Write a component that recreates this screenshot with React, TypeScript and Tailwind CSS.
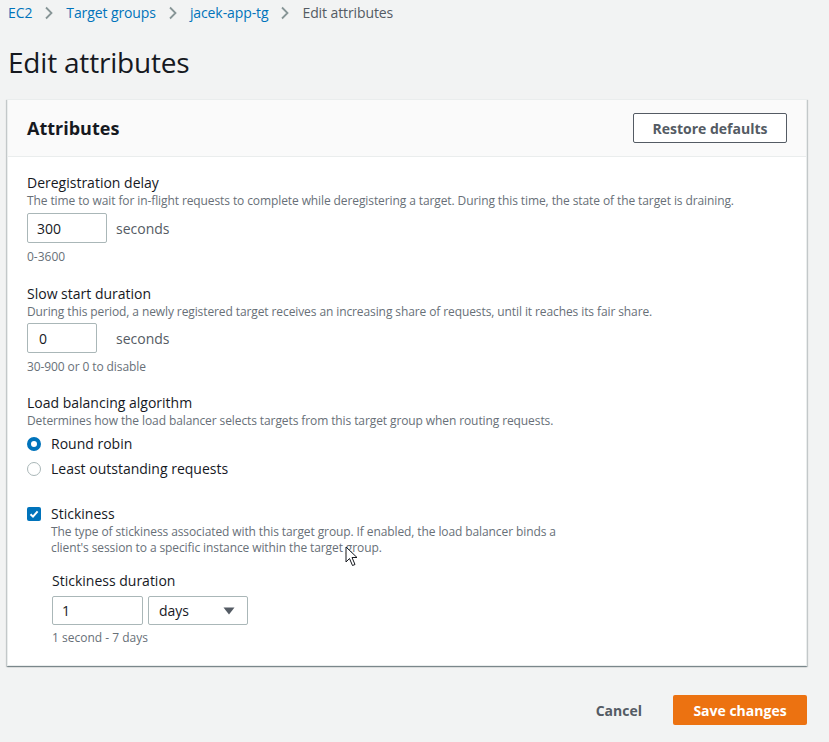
import React from "react";

function Chevron() {
  return (
    <svg width="10" height="14" viewBox="0 0 10 14" className="mx-[12px]">
      <path d="M2 1.5 L7.5 7 L2 12.5" fill="none" stroke="#879596" strokeWidth="1.8" />
    </svg>
  );
}

function Field({ label, desc, children }: { label: string; desc: string; children: React.ReactNode }) {
  return (
    <div>
      <div className="text-[14px] leading-[20px] text-[#16191f]">{label}</div>
      <div className="text-[12px] leading-[16px] tracking-[-0.1px] text-[#687078]">{desc}</div>
      {children}
    </div>
  );
}

export default function App() {
  return (
    <div
      className="min-h-[742px] bg-[#f2f3f3] relative"
      style={{ fontFamily: '"Open Sans", "Noto Sans", Arial, sans-serif' }}
    >
      <div className="pl-[8px] pr-[22px]">
        {/* breadcrumb */}
        <div className="flex items-center pt-[3px] h-[23px] text-[14px] leading-[20px] tracking-[-0.1px]">
          <span className="text-[#0073bb]">EC2</span>
          <Chevron />
          <span className="text-[#0073bb]">Target groups</span>
          <Chevron />
          <span className="text-[#0073bb]">jacek-app-tg</span>
          <Chevron />
          <span className="text-[#545b64]">Edit attributes</span>
        </div>
        <h1 className="mt-[21px] text-[28px] leading-[36px] tracking-[-0.2px] text-[#16191f] font-normal">Edit attributes</h1>

        {/* panel */}
        <div className="mt-[19px] -ml-[1px] bg-white border border-[#eaeded] shadow-[0_1px_1px_0_rgba(0,28,36,0.3),1px_1px_1px_0_rgba(0,28,36,0.15),-1px_1px_1px_0_rgba(0,28,36,0.15)]">
          <div className="flex items-center justify-between bg-[#fafafa] border-b border-[#eaeded] px-[19px] py-[13px]">
            <div className="text-[18px] leading-[22px] font-bold text-[#16191f]">Attributes</div>
            <button className="h-[30px] w-[154px] border border-[#545b64] rounded-[2px] bg-white text-[14px] font-bold text-[#545b64]">
              Restore defaults
            </button>
          </div>

          <div className="px-[19px] pt-[16px] pb-[19px]">
            <Field
              label="Deregistration delay"
              desc="The time to wait for in-flight requests to complete while deregistering a target. During this time, the state of the target is draining."
            >
              <div className="flex items-center mt-[4px]">
                <div className="w-[80px] h-[30px] border border-[#aab7b8] rounded-[2px] px-[9px] flex items-center text-[14px] text-[#16191f]">
                  300
                </div>
                <span className="ml-[9px] text-[14px] text-[#545b64]">seconds</span>
              </div>
              <div className="mt-[6px] text-[12px] leading-[16px] text-[#687078]">0-3600</div>
            </Field>

            <div className="mt-[19px]">
              <Field
                label="Slow start duration"
                desc="During this period, a newly registered target receives an increasing share of requests, until it reaches its fair share."
              >
                <div className="flex items-center mt-[3px]">
                  <div className="w-[70px] h-[30px] border border-[#aab7b8] rounded-[2px] px-[11px] flex items-center text-[14px] text-[#16191f]">
                    0
                  </div>
                  <span className="ml-[19px] text-[14px] text-[#545b64]">seconds</span>
                </div>
                <div className="mt-[6px] text-[12px] leading-[16px] tracking-[-0.1px] text-[#687078]">30-900 or 0 to disable</div>
              </Field>
            </div>

            <div className="mt-[18px]">
              <Field
                label="Load balancing algorithm"
                desc="Determines how the load balancer selects targets from this target group when routing requests."
              >
                <div className="mt-[2px] flex items-center h-[25px]">
                  <span className="w-[14px] h-[14px] rounded-full border-[4px] border-[#0073bb] bg-white" />
                  <span className="ml-[10px] text-[14px] leading-[20px] text-[#16191f]">Round robin</span>
                </div>
                <div className="flex items-center h-[25px]">
                  <span className="w-[14px] h-[14px] rounded-full border border-[#aab7b8] bg-white" />
                  <span className="ml-[10px] text-[14px] leading-[20px] text-[#16191f]">Least outstanding requests</span>
                </div>
              </Field>
            </div>

            <div className="mt-[23px] flex">
              <div className="pt-[3px]">
                <span className="w-[14px] h-[14px] rounded-[2px] bg-[#0073bb] flex items-center justify-center">
                  <svg width="10" height="10" viewBox="0 0 10 10">
                    <path d="M1.5 5.2 L4 7.6 L8.6 2.4" fill="none" stroke="white" strokeWidth="2" />
                  </svg>
                </span>
              </div>
              <div className="ml-[10px]">
                <div className="text-[14px] leading-[20px] text-[#16191f]">Stickiness</div>
                <div className="text-[12px] leading-[16px] tracking-[-0.1px] text-[#687078] max-w-[515px]">
                  The type of stickiness associated with this target group. If enabled, the load balancer binds a client's session to a specific instance within the target group.
                </div>
              </div>
            </div>

            <div className="ml-[25px] mt-[15px]">
              <div className="text-[14px] leading-[20px] text-[#16191f]">Stickiness duration</div>
              <div className="flex mt-[5px] gap-[5px]">
                <div className="w-[91px] h-[29px] border border-[#aab7b8] rounded-[2px] px-[9px] flex items-center text-[14px] text-[#16191f]">
                  1
                </div>
                <div className="w-[100px] h-[29px] border border-[#aab7b8] rounded-[2px] pl-[10px] pr-[12px] flex items-center justify-between text-[14px] text-[#16191f]">
                  <span>days</span>
                  <svg width="12" height="8" viewBox="0 0 12 8">
                    <path d="M0.5 0.5 L11.5 0.5 L6 7.5 Z" fill="#545b64" />
                  </svg>
                </div>
              </div>
              <div className="mt-[5px] text-[12px] leading-[16px] text-[#687078]">1 second - 7 days</div>
            </div>
          </div>
        </div>

        {/* footer */}
        <div className="mt-[29px] flex items-center justify-end">
          <button className="text-[14px] font-bold text-[#545b64] mr-[31px]">Cancel</button>
          <button className="h-[30px] w-[134px] rounded-[2px] bg-[#ec7211] text-white text-[14px] font-bold">
            Save changes
          </button>
        </div>
      </div>

      {/* mouse cursor */}
      <svg className="absolute left-[345px] top-[546px]" width="14" height="21" viewBox="0 0 14 21">
        <path d="M1 1 L1 16 L4.5 12.5 L7.5 19.5 L10 18.5 L7 11.5 L12 11.5 Z" fill="white" stroke="#16191f" strokeWidth="1" strokeLinejoin="round" />
      </svg>
    </div>
  );
}
